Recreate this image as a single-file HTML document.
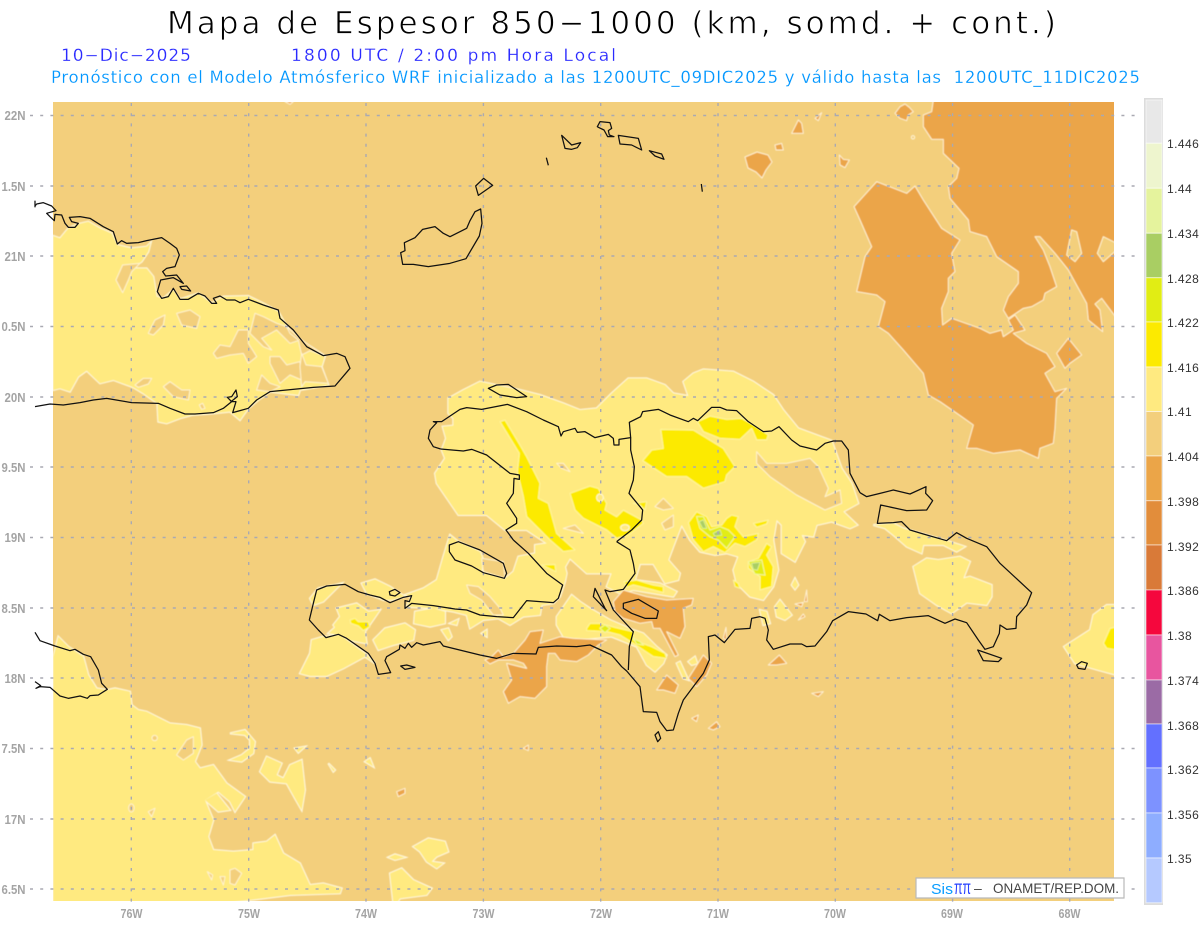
<!DOCTYPE html>
<html><head><meta charset="utf-8"><title>Mapa de Espesor</title>
<style>
html,body{margin:0;padding:0;background:#fff}
svg{display:block}
svg *{vector-effect:non-scaling-stroke}
.t{font-family:"DejaVu Sans","Liberation Sans",sans-serif}
.i{font-family:"Liberation Sans",sans-serif}
.ax{font-family:"Liberation Sans",sans-serif;font-weight:bold;font-size:13px;fill:#a4a4a4}
.cb{font-family:"Liberation Sans",sans-serif;font-size:12px;fill:#333;letter-spacing:.45px}
.coast{fill:none;stroke:#111;stroke-width:1.25;stroke-linejoin:round}
.h{fill:#F3CF7C;stroke:#FFF3CF;stroke-width:1;stroke-linejoin:round}
.o{fill:#EBA548;stroke:#FFF0CF;stroke-width:1;stroke-linejoin:round}
.y{fill:#FFEA80;stroke:#FFF8DC;stroke-width:1;stroke-linejoin:round}
.s{fill:#FCEA00;stroke:#FFF6A0;stroke-width:1;stroke-linejoin:round}
.l{fill:#E1ED14;stroke:#F4F6A0;stroke-width:1}
.g{fill:#A9CE63;stroke:#DDEEA0;stroke-width:.8}
</style></head><body>
<svg width="1200" height="927" viewBox="0 0 1200 927" xmlns="http://www.w3.org/2000/svg">
<defs>
<filter id="sf" x="0" y="0" width="100%" height="100%"><feGaussianBlur stdDeviation=".4"/></filter>
<clipPath id="mc"><rect x="53" y="102" width="1061" height="799"/></clipPath>
<g id="yu">
 <g transform="translate(0,100) scale(.33333)">
  <polygon points="160,408 180,415 205,385 235,372 265,365 300,385 335,400 352,435 395,445 440,440 452,428 445,455 425,485 395,505 440,505 460,530 470,590 490,595 520,570 540,598 595,580 635,610 670,590 745,588 790,610 835,635 860,680 900,720 940,745 975,768 965,800 985,855 900,870 895,885 810,875 775,900 745,925 720,960 690,935 640,940 575,945 540,955 500,970 475,965 472,910 430,880 405,865 395,860 340,840 300,850 260,812 235,830 210,875 180,865 160,870"/>
 </g>
 <g transform="translate(420,370) scale(.33333)">
  <polygon points="85,85 130,60 180,35 205,40 300,60 360,75 430,100 480,120 530,115 575,70 625,25 680,25 735,45 760,70 805,78 790,35 820,10 850,-2 940,5 1000,35 1060,75 1090,120 1135,175 1235,212 1265,295 1295,340 1315,400 1270,425 1312,465 1290,475 1235,455 1190,465 1180,500 1145,495 1155,515 1125,575 1085,550 1085,465 1070,450 1060,510 1075,600 1060,650 1030,690 990,680 950,640 940,600 955,560 920,550 885,555 840,545 810,510 785,465 760,530 745,570 780,610 775,630 735,640 700,582 660,582 645,630 720,640 770,665 760,680 640,660 600,670 560,650 575,610 500,610 450,565 430,600 400,610 360,590 345,550 380,520 320,480 255,480 200,435 115,435 50,340 45,310 75,265 65,240 78,205 68,170 100,167 100,145 85,130"/>
 </g>
 <g transform="translate(290,540) scale(.33333)">
  <polygon points="460,50 480,-15 505,5 570,35 580,60 575,95 645,115 670,95 685,50 735,40 735,15 770,10 820,60 830,100 825,125 810,170 790,190 755,195 750,225 700,230 660,255 625,235 580,240 540,265 530,225 490,215 430,205 350,200 365,170 345,165 400,145 440,120"/>
  <polygon points="800,230 845,165 870,185 900,205 960,240 1030,270 1060,280 1100,320 1130,345 1120,370 1095,395 1070,375 1040,320 965,290 900,295 845,300 820,290 800,255"/>
  <polygon points="30,400 60,340 65,300 100,290 150,285 225,340 255,370 225,350 160,385 110,408 60,408"/>
  <polygon points="60,175 85,145 135,135 155,130 100,185 70,195"/>
  <polygon points="130,255 150,230 140,205 200,190 235,215 270,210 225,275 230,310 175,300 150,285 115,280 135,262"/>
  <polygon points="250,300 285,265 345,250 375,270 370,300 310,315 265,330"/>
  <polygon points="215,130 255,118 300,140 345,170 305,180 280,180 230,160"/>
  <polygon points="375,215 430,205 465,215 465,250 420,260 372,250"/>
  <polygon points="455,270 475,265 485,290 475,300"/>
  <polygon points="480,250 505,238 500,255"/>
  <polygon points="575,280 590,270 590,290"/>
  <polygon points="1160,370 1170,365 1195,420 1180,415"/>
  <polygon points="1195,365 1215,350 1222,370 1205,375"/>
 </g>
 <g transform="translate(0,620) scale(.33333)">
  <polygon points="160,110 175,50 205,80 250,110 265,165 290,205 322,210 345,205 390,215 395,255 415,270 440,275 480,295 510,310 560,315 600,325 605,375 585,425 600,445 640,435 680,490 735,530 705,575 690,545 655,515 615,540 640,600 625,650 640,690 700,695 760,690 760,670 800,665 825,645 850,700 900,730 930,795 970,790 1025,805 1020,820 870,825 750,840 650,850 160,850"/>
  <polygon points="690,340 735,330 765,365 760,400 725,425 690,420 725,405 750,385 750,360 735,345"/>
  <polygon points="780,455 800,410 845,430 830,465 850,475 870,435 905,420 915,510 905,570 885,535 860,490 810,485"/>
  <polygon points="1180,850 1170,760 1205,745 1240,780 1295,805 1280,825 1200,835 1190,850"/>
  <polygon points="1240,680 1285,655 1335,665 1345,695 1310,710 1295,725 1330,730 1310,745 1280,725 1260,695"/>
  <polygon points="1165,712 1185,703 1215,712 1185,720"/>
  <polygon points="885,385 915,380 895,398"/>
  <polygon points="985,430 1005,450 1000,455"/>
  <polygon points="1095,425 1110,415 1120,440"/>
  <polygon points="615,540 655,575 690,570 650,520"/>
 </g>
 <g transform="translate(760,470) scale(.33333)">
  <polygon points="460,290 500,265 535,270 600,260 630,275 610,325 630,320 695,345 695,380 680,405 620,398 575,430 530,405 480,370"/>
  <polygon points="340,165 400,160 430,175 500,195 570,215 615,230 590,245 550,225 490,225 485,250 440,230 400,195 375,175"/>
  <polygon points="912,530 990,480 1000,435 1040,405 1070,405 1070,615 1015,600 945,580"/>
  <polygon points="45,410 60,390 95,435 75,450 50,440"/>
  <polygon points="95,345 105,325 115,345 105,358"/>
  <polygon points="0,420 20,425 30,460 10,465"/>
 </g>
</g>
</defs>

<g clip-path="url(#mc)">
<g filter="url(#sf)">
<rect x="40" y="90" width="1090" height="825" fill="#F3CF7C"/>
<use href="#yu" fill="#FFEA80" stroke="#FFF8DC" stroke-width="2"/>
<use href="#yu" fill="#FFEA80" stroke="none"/>

<!-- Cuba holes -->
<g transform="translate(0,100) scale(.33333)">
 <polygon class="h" points="348,540 368,495 420,490 395,515 385,540 368,578"/>
 <polygon class="h" points="445,700 465,660 495,645 490,675 460,705"/>
 <polygon class="h" points="530,640 570,630 600,650 590,685 545,675"/>
 <polygon class="h" points="640,760 660,735 690,740 715,690 745,690 745,730 770,770 745,790 730,760 690,765 650,775"/>
 <polygon class="h" points="765,640 790,650 830,670 860,680 900,720 870,730 830,690 785,715 815,750 790,740 750,700"/>
 <polygon class="h" points="860,680 905,720 975,768 930,752 905,765 895,720 870,700"/>
 <polygon class="h" points="810,770 840,770 860,795 900,785 905,840 870,825 840,850 810,790"/>
 <polygon class="h" points="905,760 918,795 965,800 985,850 915,845 905,860 900,800"/>
 <polygon class="h" points="770,870 785,825 810,850 840,860 810,875"/>
 <polygon class="h" points="405,855 430,835 455,835 445,852 415,862"/>
 <polygon class="h" points="490,860 510,845 545,870 570,870 565,900 520,890"/>
 <polygon class="h" points="598,915 608,910 615,925 605,928"/>
</g>

<!-- Hispaniola holes and strong yellow -->
<g transform="translate(420,370) scale(.33333)">
 <polygon class="h" points="1010,245 1040,280 1100,280 1170,265 1195,290 1225,355 1215,380 1260,360 1265,400 1215,420 1130,375 1050,320 1010,280"/>
 <polygon class="h" points="410,280 430,280 450,305 425,295"/>
 <polygon class="h" points="430,475 465,465 490,490 450,480"/>
 <polygon class="h" points="705,410 730,385 760,415 730,420"/>
 <polygon class="h" points="725,460 760,435 760,470 735,480"/>
 <polygon class="h" points="185,565 250,575 255,625 190,605"/>
 <polygon class="s" points="240,155 255,150 300,225 320,260 360,340 355,385 385,400 410,490 465,540 430,545 390,510 320,440 310,380 292,305 298,250"/>
 <polygon class="s" points="450,370 510,348 535,355 560,400 555,420 590,440 610,420 665,450 670,460 625,495 590,505 560,480 490,445 465,420"/>
 <ellipse class="y" cx="540" cy="383" rx="10" ry="11"/>
 <ellipse class="y" cx="615" cy="473" rx="13" ry="9"/>
 <polygon class="s" points="668,272 695,240 730,235 722,178 820,180 910,235 945,290 920,315 915,335 850,355 800,320 740,320"/>
 <polygon class="s" points="832,155 870,138 920,148 965,145 1000,165 1045,195 1040,210 1010,210 995,175 960,208 900,205 850,185"/>
 <polygon class="s" points="640,400 680,395 675,420 660,405"/>
 <polygon class="s" points="365,585 405,583 408,605"/>
 <polygon class="s" points="612,635 650,630 700,645 730,650 730,668 700,660 640,645 620,652"/>
 <polygon class="s" points="805,458 830,425 860,440 875,470 905,465 920,445 935,435 955,440 945,470 970,500 1015,490 1010,510 975,530 945,520 915,548 880,530 850,545 820,510"/>
 <polygon class="l" points="830,440 850,440 870,480 900,470 925,480 945,500 920,535 895,510 870,500 840,475"/>
 <polygon class="g" points="838,455 850,450 860,475 848,475"/>
 <polygon class="g" points="880,490 900,480 905,495 885,498"/>
 <polygon class="s" points="1020,660 1020,620 985,595 985,575 1015,565 1040,520 1055,530 1040,555 1060,590 1055,650"/>
 <polygon class="l" points="985,575 1025,570 1035,615 1005,612"/>
 <polygon class="g" points="995,580 1020,577 1012,600 1000,598"/>
 <polygon class="s" points="1000,460 1045,450 1040,462 1010,472"/>
 <polygon class="s" points="940,630 955,640 960,655 945,650"/>
</g>

<g transform="translate(290,540) scale(.33333)">
 <polygon class="h" points="530,135 565,140 600,170 630,205 640,225 610,225 575,180 540,160"/>
 <polygon class="s" points="180,240 195,235 205,245 235,245 240,260 220,272 205,258 182,250"/>
 <polygon class="s" points="890,265 900,250 930,250 975,262 1030,275 1030,300 1085,320 1125,340 1130,355 1090,350 1060,330 1030,310 990,285 950,275 890,272"/>
 <polygon class="l" points="930,265 945,255 960,265 945,278"/>
 <polygon class="l" points="1030,295 1050,305 1060,315 1040,312"/>
 <polygon class="o" points="970,185 1000,150 1070,170 1130,180 1210,175 1205,195 1180,205 1185,260 1170,295 1130,275 1165,345 1155,350 1110,265 1090,265 1085,245 1050,250 1000,235 975,215"/>
 <polygon class="o" points="585,360 605,350 625,330 640,350 670,340 705,300 720,275 760,270 750,310 810,290 850,295 950,300 925,315 895,345 860,365 810,360 795,340 775,340 770,380 770,440 735,475 690,470 655,490 640,455 665,420 650,370 710,385 700,370 670,360 625,360 600,372"/>
 <polygon class="o" points="1100,450 1130,405 1165,435 1155,460 1120,450"/>
 <polygon class="o" points="1195,415 1240,345 1265,370 1250,405 1220,440"/>
 <polygon class="o" points="1205,535 1225,525 1220,545"/>
 <polygon class="o" points="1255,565 1280,545 1290,560 1270,570"/>
 <polygon class="o" points="700,625 715,615 715,632"/>
 <polygon class="o" points="1300,295 1308,262 1310,300"/>
</g>

<!-- NE orange -->
<g transform="translate(760,100) scale(.33333)">
 <polygon class="o" points="520,0 515,35 490,45 490,80 515,118 550,118 550,160 597,205 590,235 565,260 570,295 625,360 630,395 680,410 710,470 775,515 775,550 745,590 730,630 745,655 790,625 815,620 850,600 855,580 890,560 870,500 850,450 825,410 840,410 885,460 925,510 980,610 985,660 1028,695 1020,630 1005,612 1025,595 1070,655 1070,0"/>
 <polygon class="h" points="920,465 935,390 950,395 965,460 945,485"/>
 <polygon class="h" points="1012,460 1030,410 1070,430 1070,450 1030,485"/>
 <polygon class="o" points="282,320 350,245 440,280 465,258 490,300 545,385 600,420 575,460 585,515 565,535 565,575 545,625 548,675 575,655 660,685 690,700 725,690 730,710 760,690 745,660 765,645 795,690 760,700 800,730 860,760 885,800 855,820 885,875 920,865 890,895 885,985 880,1030 840,1045 835,1075 780,1050 700,1060 650,1045 620,1045 640,975 605,950 540,905 505,885 490,820 430,750 385,700 355,680 375,605 350,585 290,575 315,470 335,440 300,360"/>
 <polygon class="o" points="890,760 925,715 965,765 930,790 915,805"/>
 <polygon class="o" points="405,40 420,20 435,12 448,22 460,35 445,45 440,62 420,55"/>
 <polygon class="o" points="165,55 185,38 175,62"/>
 <polygon class="o" points="95,100 105,80 115,60 125,70 130,100"/>
 <polygon class="o" points="45,135 65,130 70,150 48,150"/>
 <polygon class="o" points="238,165 250,178 268,180 255,203 240,195"/>
 <ellipse class="h" cx="459" cy="112" rx="5" ry="5"/>
</g>
<polygon class="o" points="745,157 757,152 768,155 772,162 766,170 762,178 756,172 748,168"/>

<!-- E and S small -->
<g transform="translate(760,470) scale(.33333)">
 <polygon class="s" points="1030,520 1050,475 1070,470 1070,540 1040,535"/>
 <polygon class="o" points="25,585 58,555 80,580 50,585"/>
 <polygon class="o" points="155,670 190,665 175,680"/>
 <polygon class="o" points="105,402 130,397 125,410"/>
 <polygon class="o" points="115,450 130,432 135,440"/>
 <polygon class="o" points="133,395 140,360 142,395"/>
</g>
<g transform="translate(0,620) scale(.33333)">
 <polygon class="h" points="530,405 560,360 580,350 580,400 550,420"/>
 <polygon class="h" points="445,575 465,565 455,590"/>
 <polygon class="h" points="660,770 675,770 670,795"/>
 <polygon class="h" points="690,750 705,745 725,760 705,795 690,790"/>
 <polygon class="h" points="622,755 638,765 635,780"/>
 <ellipse class="h" cx="464" cy="354" rx="8" ry="8"/>
 <ellipse class="h" cx="394" cy="564" rx="8" ry="12"/>
 <polygon class="o" points="1190,515 1215,505 1215,520 1195,530"/>
</g>
<g transform="translate(0,100) scale(.33333)">
 <polygon class="o" points="855,5 880,5 870,13"/>
</g>
</g>
</g>

<!-- Grid -->
<g stroke="#A9A9B2" stroke-width="1.4" stroke-dasharray="3 7.2" fill="none">
 <path d="M30 115.5H1135M30 186H1135M30 256H1135M30 326.5H1135M30 397H1135M30 467H1135M30 537.5H1135M30 608H1135M30 678H1135M30 748.5H1135M30 819H1135M30 889H1135"/>
 <path d="M131.3 103V908M248.7 103V908M366 103V908M483.4 103V908M600.7 103V908M718 103V908M835.3 103V908M952.6 103V908M1069.7 103V908"/>
</g>

<!-- Coasts -->
<g transform="translate(0,100) scale(.33333)">
 <polyline class="coast" points="105,318 110,312 130,308 155,318 168,332 140,340 150,350 163,362 165,343 185,345 195,370 205,382 225,382 235,370 215,365 208,352 240,350 270,355 310,380 340,395 352,432 365,422 380,430 415,428 440,422 485,413 510,430 530,445 538,465 525,500 500,505 488,515 497,528 530,525 550,550 520,533 482,540 472,575 485,595 505,590 520,565 540,598 565,598 595,580 615,588 635,610 650,610 640,595 660,588 680,600 705,600 720,608 745,598 790,615 835,630 840,655 880,690 920,740 970,767 1010,760 1035,770 1050,805 1005,858 940,862 810,875 770,900 745,925 720,932 698,938 708,905 693,905 712,890 708,870 695,890 682,892 695,905 670,925 640,938 585,942 555,942 510,925 475,910 395,908 320,895 280,900 240,908 190,915 150,912 105,920"/>
 <polygon class="coast" points="540,560 560,558 572,573 545,568"/>
 <path class="coast" d="M105 302V322"/>
</g>
<g transform="translate(380,110) scale(.33333)">
 <polygon class="coast" points="68,463 62,428 75,422 73,398 105,383 128,358 165,350 190,370 210,380 260,355 270,332 285,305 302,297 306,340 298,378 258,446 210,460 145,470 100,463"/>
 <polygon class="coast" points="287,228 311,205 338,226 295,256"/>
 <polygon class="coast" points="545,76 575,105 602,98 592,113 575,118 555,115"/>
 <polygon class="coast" points="652,50 660,35 690,38 695,55 685,62 688,75 702,80 683,80 672,60 655,52"/>
 <polygon class="coast" points="715,76 775,85 785,120 755,105 720,102"/>
 <polygon class="coast" points="808,122 845,132 852,148 825,138"/>
 <path class="coast" d="M499 143L505 166M964 222L967 245"/>
</g>
<g transform="translate(420,370) scale(.33333)">
 <polyline class="coast" points="62,237 40,230 25,205 30,180 50,158 40,155 65,155 120,118 140,113 185,118 262,103 320,125 370,150 415,170 423,198 430,185 465,175 472,187 495,185 525,203 565,193 580,205 582,225 597,225 597,208 632,203 628,157 662,140 668,125 715,118 750,135 805,155 820,145 833,152 875,112 900,112 920,120 950,122 985,155 1030,185 1055,183 1077,170 1115,210 1140,228 1190,240 1215,220 1240,213 1265,213 1285,240 1290,310 1320,368"/>
 <polyline class="coast" points="280,510 258,480 290,460 290,445 260,400 280,370 282,325 298,328 298,315 270,310 200,255 155,238 130,243 62,237"/>
 <polyline class="coast" points="632,203 632,240 643,290 640,330 627,370 668,420 665,450 635,480 590,515"/>
 <polygon class="coast" points="205,55 230,45 265,43 320,80 290,83 240,75"/>
</g>
<g transform="translate(760,470) scale(.33333)">
 <polyline class="coast" points="300,68 320,80 360,70 400,60 450,72 498,50 497,70 518,92 500,120 440,122 362,105 352,160 400,158 425,155 450,180 490,192 560,212 590,188 620,205 680,230 720,280 815,368 800,405 770,440 768,475 740,478 720,465 718,490 700,530 675,538 655,510 620,458 585,447 555,460 505,437 440,443 390,452 358,433 353,452 318,432 265,425 218,452 200,485 165,528 140,530 125,522 90,522 40,538 20,510 25,480 15,445 0,440"/>
 <polygon class="coast" points="653,540 725,565 715,575 670,572"/>
 <polygon class="coast" points="950,585 965,575 982,580 975,598 955,595"/>
</g>
<g transform="translate(290,540) scale(.33333)">
 <polyline class="coast" points="1410,230 1385,235 1380,265 1335,268 1303,308 1275,285 1255,290 1258,360 1240,400 1210,440 1180,480 1165,520 1150,570 1130,572 1110,545 1100,517 1060,515 1050,440 1010,393 995,380 965,345 900,315 860,320 800,318 745,322 738,342 670,340 620,355 570,345 460,318 450,305 400,315 380,308 365,322 355,310 345,325 330,315 328,328 290,350 285,362 302,398 265,403 255,370 235,340 170,295 145,283 108,293 85,270 58,240 70,190 80,150 110,138 165,133 205,155 240,165 270,172 300,188 340,172 365,167 358,185 345,182 345,205 365,190 430,197 495,207 530,210 570,225 620,230 670,233 710,182 790,188 805,175 818,135 770,100 715,40 670,0"/>
 <polygon class="coast" points="478,15 505,5 570,30 640,70 650,100 643,115 580,98 545,78 495,60 478,35"/>
 <polygon class="coast" points="298,155 315,148 330,158 315,168 300,165"/>
 <polygon class="coast" points="332,378 350,375 375,382 345,388"/>
 <polygon class="coast" points="1095,585 1105,575 1112,595 1103,605"/>
 <polyline class="coast" points="980,5 1020,30 1030,70 1035,100 1000,148 960,155 945,150 970,210 1030,275 1018,320 1015,390"/>
 <polygon class="coast" points="915,145 945,205 950,212 910,170"/>
 <polygon class="coast" points="1000,190 1045,178 1105,213 1100,235 1065,235 1025,220 1000,205"/>
</g>
<g transform="translate(0,620) scale(.33333)">
 <polyline class="coast" points="105,37 120,62 165,78 210,92 225,88 250,103 272,110 295,150 305,190 322,208 295,225 270,227 262,235 240,228 205,235 180,228 150,202 120,200 108,205 122,197 105,185"/>
</g>

<!-- Titles -->
<text class="t" x="167" y="33.5" font-size="31" textLength="889" lengthAdjust="spacing" fill="#000" stroke="#fff" stroke-width=".8">Mapa de Espesor 850−1000 (km, somd. + cont.)</text>
<text class="t" x="61" y="61" font-size="17" textLength="130" lengthAdjust="spacing" fill="#2A2AFF" stroke="#fff" stroke-width=".2">10−Dic−2025</text>
<text class="t" x="291" y="61" font-size="17" textLength="325" lengthAdjust="spacing" fill="#2A2AFF" stroke="#fff" stroke-width=".2">1800 UTC / 2:00 pm Hora Local</text>
<text class="t" x="51" y="83" font-size="16.5" textLength="1089" lengthAdjust="spacing" fill="#0096FF" stroke="#fff" stroke-width=".2" xml:space="preserve">Pronóstico con el Modelo Atmósferico WRF inicializado a las 1200UTC_09DIC2025 y válido hasta las  1200UTC_11DIC2025</text>

<!-- Axis labels -->
<g class="ax" text-anchor="end">
 <text x="25.5" y="120" textLength="21" lengthAdjust="spacingAndGlyphs">22N</text><text x="25.5" y="191" textLength="24" lengthAdjust="spacingAndGlyphs">1.5N</text><text x="25.5" y="261" textLength="21" lengthAdjust="spacingAndGlyphs">21N</text><text x="25.5" y="331" textLength="24" lengthAdjust="spacingAndGlyphs">0.5N</text><text x="25.5" y="402" textLength="21" lengthAdjust="spacingAndGlyphs">20N</text><text x="25.5" y="472" textLength="24" lengthAdjust="spacingAndGlyphs">9.5N</text><text x="25.5" y="542" textLength="21" lengthAdjust="spacingAndGlyphs">19N</text><text x="25.5" y="613" textLength="24" lengthAdjust="spacingAndGlyphs">8.5N</text><text x="25.5" y="683" textLength="21" lengthAdjust="spacingAndGlyphs">18N</text><text x="25.5" y="753" textLength="24" lengthAdjust="spacingAndGlyphs">7.5N</text><text x="25.5" y="824" textLength="21" lengthAdjust="spacingAndGlyphs">17N</text><text x="25.5" y="894" textLength="24" lengthAdjust="spacingAndGlyphs">6.5N</text>
</g>
<g class="ax">
 <text x="120.5" y="918" textLength="22" lengthAdjust="spacingAndGlyphs">76W</text><text x="238" y="918" textLength="22" lengthAdjust="spacingAndGlyphs">75W</text><text x="355" y="918" textLength="22" lengthAdjust="spacingAndGlyphs">74W</text><text x="472.5" y="918" textLength="22" lengthAdjust="spacingAndGlyphs">73W</text><text x="590" y="918" textLength="22" lengthAdjust="spacingAndGlyphs">72W</text><text x="707" y="918" textLength="22" lengthAdjust="spacingAndGlyphs">71W</text><text x="824" y="918" textLength="22" lengthAdjust="spacingAndGlyphs">70W</text><text x="941" y="918" textLength="22" lengthAdjust="spacingAndGlyphs">69W</text><text x="1058.5" y="918" textLength="22" lengthAdjust="spacingAndGlyphs">68W</text>
</g>

<!-- Colorbar -->
<rect x="1144" y="98" width="19" height="807" fill="#dcdcdc"/>
<g stroke="#fff" stroke-opacity=".55" stroke-width="1">
 <rect x="1146" y="100" width="16" height="43.3" fill="#E8E8E8"/>
 <rect x="1146" y="143.3" width="16" height="45" fill="#EEF5CE"/>
 <rect x="1146" y="188.3" width="16" height="45" fill="#E5F39D"/>
 <rect x="1146" y="233.3" width="16" height="44.4" fill="#A9CE63"/>
 <rect x="1146" y="277.7" width="16" height="44.3" fill="#E1ED14"/>
 <rect x="1146" y="322" width="16" height="45" fill="#FCEA00"/>
 <rect x="1146" y="367" width="16" height="44.5" fill="#FFEA80"/>
 <rect x="1146" y="411.5" width="16" height="44.5" fill="#F3CF7C"/>
 <rect x="1146" y="456" width="16" height="44.7" fill="#EBA548"/>
 <rect x="1146" y="500.7" width="16" height="44.3" fill="#E28D3B"/>
 <rect x="1146" y="545" width="16" height="45" fill="#D97A38"/>
 <rect x="1146" y="590" width="16" height="45" fill="#F5073D"/>
 <rect x="1146" y="635" width="16" height="45" fill="#E8559F"/>
 <rect x="1146" y="680" width="16" height="44" fill="#9B6BA5"/>
 <rect x="1146" y="724" width="16" height="44" fill="#6370FF"/>
 <rect x="1146" y="768" width="16" height="45" fill="#7D92FF"/>
 <rect x="1146" y="813" width="16" height="45" fill="#8EADFF"/>
 <rect x="1146" y="858" width="16" height="44.7" fill="#B5C9FF"/>
</g>
<g class="cb">
 <text x="1167" y="148">1.446</text><text x="1167" y="193">1.44</text><text x="1167" y="238">1.434</text><text x="1167" y="283">1.428</text><text x="1167" y="327">1.422</text><text x="1167" y="372">1.416</text><text x="1167" y="416">1.41</text><text x="1167" y="461">1.404</text><text x="1167" y="506">1.398</text><text x="1167" y="551">1.392</text><text x="1167" y="595">1.386</text><text x="1167" y="640">1.38</text><text x="1167" y="685">1.374</text><text x="1167" y="730">1.368</text><text x="1167" y="774">1.362</text><text x="1167" y="819">1.356</text><text x="1167" y="863">1.35</text>
</g>

<!-- Info box -->
<rect x="916" y="878" width="208" height="20" fill="#fff" stroke="#b9b9b9" stroke-width="1.2"/>
<text class="i" x="931" y="894" font-size="15" fill="#0A9DFF" textLength="22" lengthAdjust="spacingAndGlyphs">Sis</text>
<text class="i" x="954" y="894" font-size="19" fill="#2A44FF" textLength="17" lengthAdjust="spacingAndGlyphs">ππ</text>
<text class="i" x="974" y="893" font-size="14" fill="#444">–</text>
<text class="i" x="993" y="893" font-size="14" fill="#444" textLength="126" lengthAdjust="spacingAndGlyphs">ONAMET/REP.DOM.</text>
</svg>
</body></html>
